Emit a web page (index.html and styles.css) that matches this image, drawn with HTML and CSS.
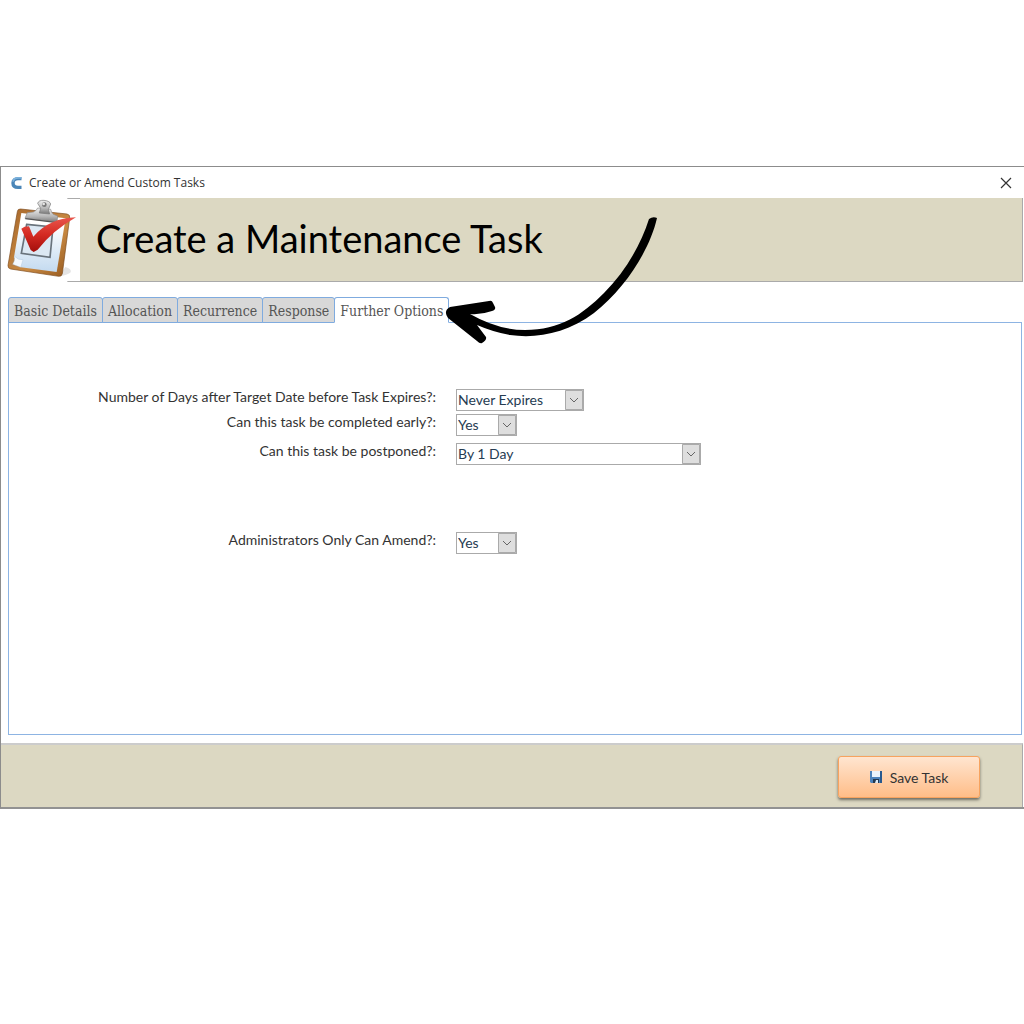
FILE: index.html
```html
<!DOCTYPE html>
<html lang="en">
<head>
    <meta charset="UTF-8">
    <meta name="viewport" content="width=device-width, initial-scale=1.0">
    <title>Create or Amend Custom Tasks</title>
    <link rel="stylesheet" href="styles.css">
</head>
<body>
    <div class="window">
        <div class="title-bar">
            <svg class="app-logo" viewBox="0 0 12 14" aria-hidden="true">
                <path d="M10.5 2.6H7C4 2.6 2 4.2 2 7s2 4.4 5 4.4h3.5" fill="none" stroke="#4a86b8" stroke-width="3.4"/>
                <path d="M2 5.6C2.6 3.2 4.4 1.9 7 1.9h3.5" fill="none" stroke="#7db2dc" stroke-width="1.8"/>
            </svg>
            <span class="window-title">Create or Amend Custom Tasks</span>
            <button type="button" class="close-btn" aria-label="Close">
                <svg viewBox="0 0 12 12" width="12" height="12"><path d="M1 1l10 10M11 1L1 11" stroke="#333" stroke-width="1.2"/></svg>
            </button>
        </div>

        <div class="header">
            <svg class="clipboard" viewBox="3 9 237 252" aria-hidden="true">
                <defs>
                    <linearGradient id="paper" x1="0" y1="0" x2="0" y2="1">
                        <stop offset="0.2" stop-color="#ffffff"/>
                        <stop offset="1" stop-color="#c3daf0"/>
                    </linearGradient>
                    <linearGradient id="wood" x1="0" y1="0" x2="1" y2="1">
                        <stop offset="0" stop-color="#a8682b"/>
                        <stop offset="0.6" stop-color="#c98a43"/>
                        <stop offset="1" stop-color="#93571d"/>
                    </linearGradient>
                    <linearGradient id="tick" x1="0" y1="0" x2="0" y2="1">
                        <stop offset="0" stop-color="#e8564c"/>
                        <stop offset="0.5" stop-color="#d42a22"/>
                        <stop offset="1" stop-color="#a30f0c"/>
                    </linearGradient>
                    <linearGradient id="metal" x1="0" y1="0" x2="0" y2="1">
                        <stop offset="0" stop-color="#f1f1f1"/>
                        <stop offset="0.6" stop-color="#b5b5b5"/>
                        <stop offset="1" stop-color="#777777"/>
                    </linearGradient>
                </defs>
                <path d="M202 10.500H240M202 259.500H240" stroke="#aaa" stroke-width="3"/>
                <path d="M180 238L196 216Q216 222 212 232Q204 240 180 244Z" fill="#e4e4e4"/>
                <path d="M52 50Q53 41 62 42L201 57Q211 59 209 69L187 236Q185 245 176 244L32 222Q23 220 24 211Z" fill="url(#wood)" stroke="#7b4a1c" stroke-width="2"/>
                <path d="M64 54L197 70L170 231L62 217L42 187Z" fill="url(#paper)"/>
                <path d="M42 187L62 217L28 211Q36 202 42 187Z" fill="#b98145"/>
                <path d="M44 184Q54 196 69 194L62 217Q46 211 38 208Q45 198 44 184Z" fill="#f4f9fe" stroke="#a4bdd5"/>
                <path d="M80 88L159 96L150 187L64 175Z" fill="#dce8f3" stroke="#69737c" stroke-width="5"/>
                <path d="M82 53L100 51Q110 47 113 39L152 43Q153 51 160 58L173 63L171 82L75 70Z" fill="url(#metal)" stroke="#8b8b8b" stroke-width="2"/>
                <path d="M76 71L172 83" stroke="#555" stroke-width="4"/>
                <path d="M113 25Q116 15 132 16Q150 18 152 27L145 44L149 57L118 54L122 40Z" fill="url(#metal)" stroke="#777" stroke-width="2"/>
                <circle cx="133" cy="29" r="7" fill="#777"/>
                <circle cx="131" cy="27" r="4" fill="#e6e6e6"/>
                <path d="M64 101Q72 94 87 94L100 125Q148 69 228 67Q160 105 113 164L101 171L92 165Z" fill="url(#tick)"/>
            </svg>
            <h1>Create a Maintenance Task</h1>
        </div>

        <div class="tabs" role="tablist">
            <button type="button" role="tab" class="tab">Basic Details</button>
            <button type="button" role="tab" class="tab">Allocation</button>
            <button type="button" role="tab" class="tab">Recurrence</button>
            <button type="button" role="tab" class="tab">Response</button>
            <button type="button" role="tab" class="tab active" aria-selected="true">Further Options</button>
        </div>

        <form id="task-form" class="panel">
            <div class="form-group">
                <label for="expires">Number of Days after Target Date before Task Expires?:</label>
                <select id="expires" class="medium"><option>Never Expires</option></select>
            </div>
            <div class="form-group">
                <label for="early">Can this task be completed early?:</label>
                <select id="early" class="small"><option>Yes</option><option>No</option></select>
            </div>
            <div class="form-group postpone">
                <label for="postponed">Can this task be postponed?:</label>
                <select id="postponed" class="large"><option>By 1 Day</option></select>
            </div>
            <div class="form-group admin">
                <label for="admin-only">Administrators Only Can Amend?:</label>
                <select id="admin-only" class="small"><option>Yes</option><option>No</option></select>
            </div>
        </form>

        <div class="footer">
            <button type="submit" form="task-form" class="save-btn">
                <svg viewBox="0 0 12 12" width="12" height="12" aria-hidden="true">
                    <path d="M0 0h12v12H1L0 11z" fill="#4c82bb"/>
                    <path d="M10 0h2v12h-2z" fill="#28598f"/>
                    <path d="M2 0h8v6H2z" fill="#eaf3fc"/>
                    <path d="M3 8h6v4H3z" fill="#24384e"/>
                    <path d="M6 9h2v3H5z" fill="#dce9f5"/>
                </svg>
                Save Task
            </button>
        </div>

        <svg class="pointer-arrow" viewBox="440 210 220 140" aria-hidden="true">
            <path d="M649 219Q653 216 657 218C650 249 626 288 594 313C567 333 537 339 510 335Q493 332 477 325L486 337Q487 340 482 343Q480 344 477 341L448 318Q443 311 450 307L489 301Q492 300 493 303L495 307Q496 310 492 311Q481 315 470 314Q498 330 525 330C560 330 582 315 604 293C626 271 641 244 649 219Z"/>
        </svg>
    </div>
</body>
</html>
```

FILE: styles.css
```css
* {
    box-sizing: border-box;
}
body {
    margin: 0;
    padding: 166px 0;
    background: #fff;
    color: #333;
    font-family: Lato, sans-serif;
    font-size: 14px;
}
button, select {
    font: inherit;
    color: inherit;
}
.window {
    position: relative;
    border-top: 1px solid #8c8c8c;
    border-left: 1px solid #8c8c8c;
    border-bottom: 2px solid #929292;
}
.title-bar {
    display: flex;
    align-items: center;
    gap: 6px;
    height: 31px;
    padding: 0 12px 0 10px;
}
.app-logo {
    width: 12px;
    height: 14px;
}
.window-title {
    font-family: "Open Sans", sans-serif;
    font-size: 12px;
}
.close-btn {
    display: flex;
    margin-left: auto;
    padding: 0;
    border: none;
    background: none;
}
.header {
    display: flex;
    gap: 16px;
    margin-right: 1px;
    background: linear-gradient(#aaa, #aaa) left bottom / 100% 1px no-repeat #dcd8c2;
    border-right: 1px solid #aaa;
}
.clipboard {
    width: 79px;
    height: 84px;
    background: #fff;
}
h1 {
    margin: 0;
    font-size: 38px;
    font-weight: normal;
    line-height: 80px;
    color: #000;
}
.tabs {
    display: flex;
    margin: 15px 0 0 7px;
}
.tab {
    height: 26px;
    margin-right: -1px;
    padding: 1px 5px 0;
    border: 1px solid #7fabdf;
    border-radius: 3px 3px 0 0;
    background: #d8d8d8;
    color: #555;
    font-family: "DejaVu Serif Condensed", "DejaVu Serif", serif;
    font-size: 14px;
}
.tab.active {
    position: relative;
    background: #fff;
    border-bottom-color: #fff;
}
.panel {
    min-height: 413px;
    margin: -1px 2px 8px 7px;
    padding-top: 66px;
    border: 1px solid #8db4e3;
}
.form-group {
    display: flex;
    gap: 20px;
    margin-bottom: 3px;
}
.form-group label {
    width: 427px;
    line-height: 16px;
    text-align: right;
}
.form-group.postpone {
    margin-top: 7px;
}
.form-group.admin {
    margin-top: 67px;
}
select {
    height: 22px;
    padding: 0 22px 2px 1px;
    border: 1px solid #aaa;
    border-radius: 0;
    appearance: none;
    color: #263c52;
    background: #fff url("data:image/svg+xml,%3Csvg xmlns='http://www.w3.org/2000/svg' width='18' height='20'%3E%3Cpath d='M0 0h18v20H0z' fill='%23dedede'/%3E%3Cpath d='M.5 .5h17v19H.5z' fill='none' stroke='%23aaa'/%3E%3Cpath d='M5 8l4 4 4-4' fill='none' stroke='%23666'/%3E%3C/svg%3E") right center no-repeat;
}
.small {
    width: 61px;
}
.medium {
    width: 128px;
}
.large {
    width: 245px;
}
.footer {
    display: flex;
    justify-content: flex-end;
    align-items: flex-start;
    height: 64px;
    margin-right: 1px;
    padding: 11px 42px 0 0;
    background: #dcd8c2;
    border-top: 2px solid #ccc;
    border-right: 1px solid #aaa;
}
.save-btn {
    display: flex;
    align-items: center;
    justify-content: center;
    gap: 8px;
    width: 142px;
    height: 42px;
    border: 1px solid #f7a35f;
    border-radius: 3px;
    background: linear-gradient(#ffe5d0, #ffbd88);
    box-shadow: 0 2px 3px rgba(0,0,0,0.5);
}
.pointer-arrow {
    position: absolute;
    left: 439px;
    top: 43px;
    width: 220px;
    height: 140px;
}
```
